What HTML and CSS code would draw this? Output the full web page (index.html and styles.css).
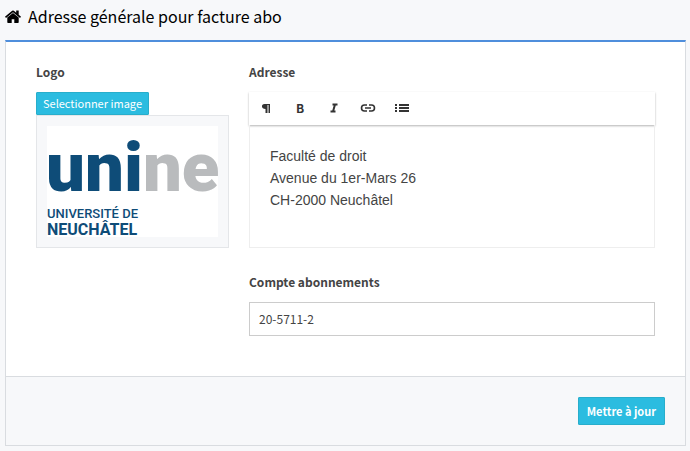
FILE: index.html
```html
<!DOCTYPE html>
<html lang="fr">
<head>
<meta charset="utf-8">
<title>Adresse générale pour facture abo</title>
<link rel="stylesheet" href="styles.css">
</head>
<body>
<main class="page">
  <h1 class="page-title">
    <svg class="home-icon" viewBox="0 0 16 13" aria-hidden="true"><path d="M8 2.9 2.3 7.6v4.6c0 .4.3.7.7.7h3.7V9.2h2.6v3.7H13c.4 0 .7-.3.7-.7V7.6z"/><path d="M15.8 6.6 13.7 4.8V.9c0-.2-.1-.3-.3-.3h-1.900c-.2 0-.3.1-.3.3v1.800L8.800.7a1.300 1.300 0 0 0-1.600 0l-7 5.900c-.2.1-.2.3 0 .5l.6.7c.1.1.3.1.5 0L8 2.200l6.700 5.600c.2.1.4.1.5 0l.6-.7c.2-.2.1-.4 0-.5z"/></svg>
    Adresse générale pour facture abo
  </h1>
  <form class="panel">
    <div class="panel-body">
      <section class="logo-column">
        <h2 class="label">Logo</h2>
        <button class="button" type="button">Selectionner image</button>
        <div class="thumbnail">
          <svg class="logo" viewBox="0 0 171 111" role="img" aria-label="Unine, Université de Neuchâtel">
            <rect class="logo-paper" width="171" height="111"/>
            <text class="logo-word" x="-1" y="65">uni<tspan class="logo-word-end">ne</tspan></text>
            <text class="logo-line" x="0" y="92">UNIVERSITÉ DE</text>
            <text class="logo-line logo-line-city" x="0" y="109">NEUCHÂTEL</text>
          </svg>
        </div>
      </section>
      <section class="fields">
        <h2 class="label" id="address-label">Adresse</h2>
        <div class="editor">
          <div class="toolbar" role="toolbar" aria-label="Mise en forme">
            <button class="tool" type="button" aria-label="Paragraphe"><svg viewBox="0 0 16 16"><path d="M6.500 4H12v9h-1.500V5h-1v8H7.500V9C3 9 3 4 6.500 4z"/></svg></button>
            <button class="tool" type="button" aria-label="Gras"><b>B</b></button>
            <button class="tool" type="button" aria-label="Italique"><svg class="stroked" viewBox="0 0 16 16"><path d="M6.500 4.500h5M4.500 11.500h5M9 4.500l-2 7"/></svg></button>
            <button class="tool" type="button" aria-label="Lien"><svg class="stroked link-icon" viewBox="0 0 16 16"><path d="M7 5H4.500a3 3 0 0 0 0 6H7M9 5h2.500a3 3 0 0 1 0 6H9M5 8h6"/></svg></button>
            <button class="tool" type="button" aria-label="Liste"><svg viewBox="0 0 16 16"><path d="M1 4h2v2H1zM1 7h2v2H1zM1 10h2v2H1zM5 4h10v2H5zM5 7h10v2H5zM5 10h10v2H5z"/></svg></button>
          </div>
          <div class="editor-text" contenteditable="true" role="textbox" aria-multiline="true" aria-labelledby="address-label" spellcheck="false">Faculté de droit<br>Avenue du 1er-Mars 26<br>CH-2000 Neuchâtel</div>
        </div>
        <label class="label" for="account">Compte abonnements</label>
        <input class="input" id="account" type="text" value="20-5711-2">
      </section>
    </div>
    <footer class="panel-footer">
      <button class="button button-submit" type="submit">Mettre à jour</button>
    </footer>
  </form>
</main>
</body>
</html>
```
FILE: styles.css
```css
* {
  box-sizing: border-box;
}

body {
  margin: 0;
  background: #f7f8fa;
  color: #444;
  font-family: "Noto Sans CJK SC", "Noto Sans", sans-serif;
  font-size: 12px;
  line-height: 20px;
}

.page {
  padding: 0 4px 4px 5px;
}

.page-title {
  display: flex;
  align-items: center;
  gap: 7px;
  height: 40px;
  margin: 0;
  padding-bottom: 8px;
  color: #000;
  font-size: 16px;
  font-weight: 400;
}

.home-icon {
  width: 16px;
  height: 13px;
}

.panel {
  border: 1px solid #d9dce0;
  border-top: 2px solid #4f8edc;
  background: #fff;
}

.panel-body {
  display: grid;
  grid-template-columns: 193px 1fr;
  gap: 20px;
  padding: 20px 30px 40px;
}

.label {
  display: block;
  margin: 0 0 10px;
  font-size: 12px;
  font-weight: 700;
}

.button {
  display: block;
  height: 23px;
  padding: 0 6px 2px;
  border: 1px solid #28aecb;
  border-radius: 1px;
  background: #2bbce0;
  color: #fff;
  font: inherit;
  font-size: 11px;
  line-height: 20px;
}

.thumbnail {
  padding: 10px;
  border: 1px solid #e4e6e9;
  background: #f7f8fa;
}

.logo {
  display: block;
  width: 100%;
}

.logo-paper {
  fill: #fff;
}

.logo-word {
  fill: #0e4c78;
  font-family: Roboto, sans-serif;
  font-size: 69px;
  font-weight: 900;
}

.logo-word-end {
  fill: #b9bbbd;
}

.logo-line {
  fill: #0e4c78;
  font-family: Roboto, sans-serif;
  font-size: 13px;
  font-weight: 500;
}

.logo-line-city {
  font-size: 16px;
  font-weight: 700;
}

.editor {
  margin-bottom: 24px;
}

.toolbar {
  display: flex;
  height: 33px;
  padding-bottom: 2px;
  box-shadow: 0 1px 2px rgba(0, 0, 0, 0.3);
}

.tool {
  display: flex;
  align-items: center;
  justify-content: center;
  width: 34px;
  padding: 0;
  border: 0;
  background: none;
  color: #333;
  font: inherit;
}

.tool svg {
  width: 16px;
  height: 16px;
  fill: #333;
}

.tool .stroked {
  fill: none;
  stroke: #333;
  stroke-width: 2;
}

.tool .link-icon {
  stroke-width: 1.6;
}

.editor-text {
  min-height: 123px;
  padding: 20px;
  border: 1px solid #eee;
  border-top: 0;
  font-family: "Liberation Sans", Arial, sans-serif;
  font-size: 14px;
  line-height: 22px;
}

.input {
  display: block;
  width: 100%;
  height: 34px;
  padding: 0 9px 2px;
  border: 1px solid #ccc;
  background: #fff;
  color: #444;
  font: inherit;
}

.panel-footer {
  display: flex;
  justify-content: flex-end;
  padding: 20px;
  border-top: 1px solid #d9dce0;
  background: #f7f8fa;
}

.button-submit {
  height: 28px;
  padding: 0 8px;
  font-weight: 700;
}
```
